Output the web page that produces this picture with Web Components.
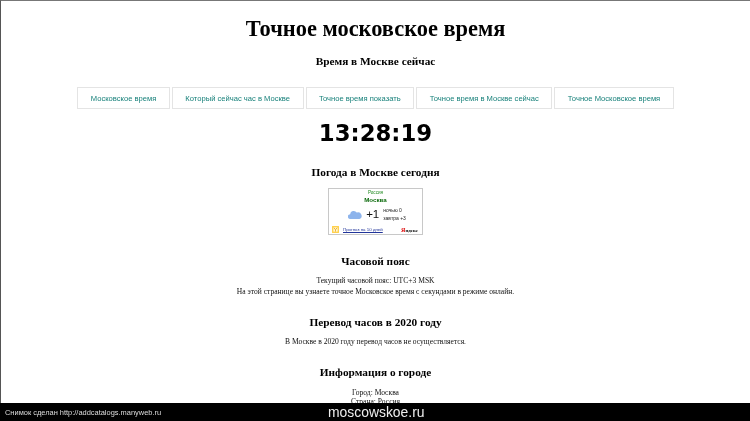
<!DOCTYPE html>
<html lang="ru"><head><meta charset="utf-8"><title>Точное московское время</title>
<style>
html,body{margin:0;padding:0;height:421px;overflow:hidden;background:#fff}
body{display:flex;flex-direction:column}
</style></head><body>
<time-page></time-page><shot-bar></shot-bar>
<script>
function def(name,html){customElements.define(name,class extends HTMLElement{constructor(){super();this.attachShadow({mode:'open'}).innerHTML=html}})}
def('page-title',`<style>:host{display:block;font:bold 22.4px/30px "Liberation Serif",serif;color:#000;text-align:center}</style><slot></slot>`);
def('sec-head',`<style>:host{display:block;font:bold 11.3px/16px "Liberation Serif",serif;color:#000;text-align:center}</style><slot></slot>`);
def('sec-text',`<style>:host{display:block;font:7.55px/10.5px "Liberation Serif",serif;color:#111;text-align:center}</style><slot></slot>`);
def('nav-item',`<style>:host{display:flex;align-items:center;justify-content:center;height:22px;box-sizing:border-box;border:1px solid #e4e4e4;font:7.6px "Liberation Sans",sans-serif;color:#17807a;padding:0 12.5px}</style><slot></slot>`);
def('nav-bar',`<style>:host{display:flex;justify-content:center;gap:2px}</style><slot></slot>`);
def('big-clock',`<style>:host{display:block;text-align:center;font:bold 22.8px/26px "DejaVu Sans",sans-serif;color:#000}</style><slot></slot>`);
def('weather-card',`<style>
:host{display:block;width:95px;height:47px;box-sizing:border-box;border:1px solid #c8c8c8;background:#fff;margin:0 auto;font-family:"Liberation Sans",sans-serif}
.w{display:flex;flex-direction:column;height:100%;align-items:center;color:#000}
.c{font-size:4.6px;line-height:6px;color:#1f8a1f;margin-top:1px}
.t{font-size:6.2px;line-height:7px;font-weight:bold;color:#0d6b0d}
.m{display:flex;align-items:center;gap:4px;height:20px;margin-top:1px;margin-left:3px}
.n{font-size:11.5px;color:#111}
.s{font-size:5px;line-height:8px;color:#222}
.f{display:flex;align-items:center;width:100%;padding:0 4px 0 3px;box-sizing:border-box;margin-top:2px}
.l{font-size:4.4px;color:#22359a;text-decoration:underline;margin-left:4px;flex:1}
.y{font-size:5px;font-family:"Liberation Serif",serif;font-weight:bold}.y b{color:#d00;font-size:6px}
</style><div class="w"><div class="c">Россия</div><div class="t">Москва</div>
<div class="m"><svg width="14" height="9" viewBox="0 0 14 9"><path d="M2.5 9a2.4 2.4 0 0 1-.4-4.8A3.6 3.6 0 0 1 8.7 2.6 3.1 3.1 0 0 1 11.5 9z" fill="#8db4ec"/></svg><span class="n">+1</span><div class="s">ночью 0<br>завтра +3</div></div>
<div class="f"><svg width="7" height="7" viewBox="0 0 7 7"><rect x=".7" y=".7" width="5.6" height="5.6" fill="#fff8d8" stroke="#ffcf45" stroke-width="1.3"/><path d="M2 1.8 3.5 3.8 5 1.8M3.5 3.8V5.6" stroke="#e9a21b" stroke-width=".8" fill="none"/></svg><span class="l">Прогноз на 10 дней</span><span class="y"><b>Я</b>ндекс</span></div></div>`);
def('shot-bar',`<style>:host{flex:none;height:18px;box-sizing:border-box;padding-left:5px;background:#000;color:#ddd;display:grid;grid-template-columns:323px auto;justify-content:start;filter:blur(.4px)}
.a{font:7.45px/20px "Liberation Sans",sans-serif}
.b{font:13.9px/18px "Liberation Sans",sans-serif;color:#eee}</style><span class="a">Снимок сделан http://addcatalogs.manyweb.ru</span><span class="b">moscowskoe.ru</span>`);
customElements.define('time-page',class extends HTMLElement{constructor(){super();this.attachShadow({mode:'open'}).innerHTML=`<style>
:host{display:block;flex:none;height:403px;box-sizing:border-box;border-left:1px solid #555;border-top:1px solid #777;overflow:hidden;padding-top:13px;filter:blur(.4px)}
</style>
<page-title>Точное московское время</page-title>
<sec-head style="margin-top:9px">Время в Москве сейчас</sec-head>
<nav-bar style="margin-top:18px"><nav-item>Московское время</nav-item><nav-item>Который сейчас час в Москве</nav-item><nav-item>Точное время показать</nav-item><nav-item>Точное время в Москве сейчас</nav-item><nav-item>Точное Московское время</nav-item></nav-bar>
<big-clock style="margin-top:11px">13:28:19</big-clock>
<sec-head style="margin-top:18px">Погода в Москве сегодня</sec-head>
<weather-card style="margin-top:8px"></weather-card>
<sec-head style="margin-top:18px">Часовой пояс</sec-head>
<sec-text style="margin-top:7px">Текущий часовой пояс: UTC+3 MSK</sec-text>
<sec-text>На этой странице вы узнаете точное Московское время с секундами в режиме онлайн.</sec-text>
<sec-head style="margin-top:17px">Перевод часов в 2020 году</sec-head>
<sec-text style="margin-top:7px">В Москве в 2020 году перевод часов не осуществляется.</sec-text>
<sec-head style="margin-top:16px">Информация о городе</sec-head>
<sec-text style="margin-top:8px">Город: Москва</sec-text>
<sec-text style="margin-top:-1.5px">Страна: Россия</sec-text>`}});
</script>
</body></html>
